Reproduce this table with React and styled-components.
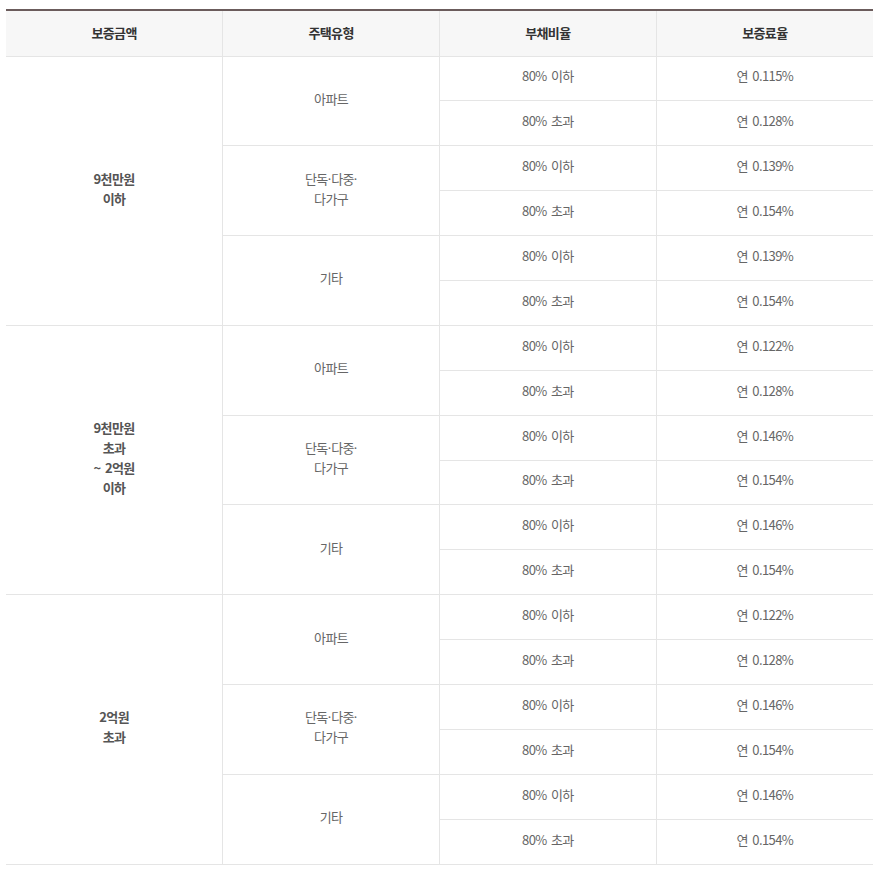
import { createGlobalStyle, styled } from "styled-components";

const GlobalStyle = createGlobalStyle`
    body {
        margin: 0;
        background: #fff;
        font-family: "Noto Sans CJK KR", "Noto Sans", sans-serif;
    }
`

const Wrap = styled.div`
    padding: 9px 10px 0 6px;
`

const Table = styled.table`
    width: 867px;
    border-collapse: collapse;
    table-layout: fixed;
    border-top: 2px solid #6b5c5c;
    font-size: 13px;
    letter-spacing: -0.6px;
    word-spacing: 2px;
`

const Th = styled.th`
    box-sizing: border-box;
    height: 46px;
    padding: 0 0 2px;
    background: #f7f7f7;
    color: #333;
    font-weight: bold;
    border-bottom: 1px solid #e5e5e5;
    border-left: 1px solid #e5e5e5;
    &:first-child { border-left: none; }
`

const Td = styled.td`
    box-sizing: border-box;
    height: 44.9px;
    padding: 0 0 4px;
    text-align: center;
    color: ${p => (p.$bold ? "#555" : "#666")};
    font-weight: ${p => (p.$bold ? "bold" : "normal")};
    line-height: 20px;
    border-bottom: 1px solid #e5e5e5;
    border-left: ${p => (p.$first ? "none" : "1px solid #e5e5e5")};
`

const Dot = styled.span`
    font-family: "Noto Sans", sans-serif;
    letter-spacing: 0;
`

const groups = [
    { amount: ["9천만원", "이하"], rates: ["0.115", "0.128", "0.139", "0.154", "0.139", "0.154"] },
    { amount: ["9천만원", "초과", "~ 2억원", "이하"], rates: ["0.122", "0.128", "0.146", "0.154", "0.146", "0.154"] },
    { amount: ["2억원", "초과"], rates: ["0.122", "0.128", "0.146", "0.154", "0.146", "0.154"] },
]

const types = [
    [["아파트"]],
    [["단독", <Dot key="a">·</Dot>, "다중", <Dot key="b">·</Dot>], ["다가구"]],
    [["기타"]],
]

function Lines({ items }) {
    return items.map((t, i) => (
        <span key={i}>{t}{i < items.length - 1 && <br />}</span>
    ))
}

export default function App() {
    return (
        <>
            <GlobalStyle />
            <Wrap>
                <Table>
                    <thead>
                        <tr>
                            <Th>보증금액</Th>
                            <Th>주택유형</Th>
                            <Th>부채비율</Th>
                            <Th>보증료율</Th>
                        </tr>
                    </thead>
                    <tbody>
                        {groups.map((g, gi) =>
                            g.rates.map((rate, ri) => {
                                const typeIndex = Math.floor(ri / 2)
                                return (
                                    <tr key={gi + "-" + ri}>
                                        {ri === 0 && (
                                            <Td $first $bold rowSpan={6}><Lines items={g.amount} /></Td>
                                        )}
                                        {ri % 2 === 0 && (
                                            <Td rowSpan={2}><Lines items={types[typeIndex]} /></Td>
                                        )}
                                        <Td>{ri % 2 === 0 ? "80% 이하" : "80% 초과"}</Td>
                                        <Td>연 {rate}%</Td>
                                    </tr>
                                )
                            })
                        )}
                    </tbody>
                </Table>
            </Wrap>
        </>
    )
}
